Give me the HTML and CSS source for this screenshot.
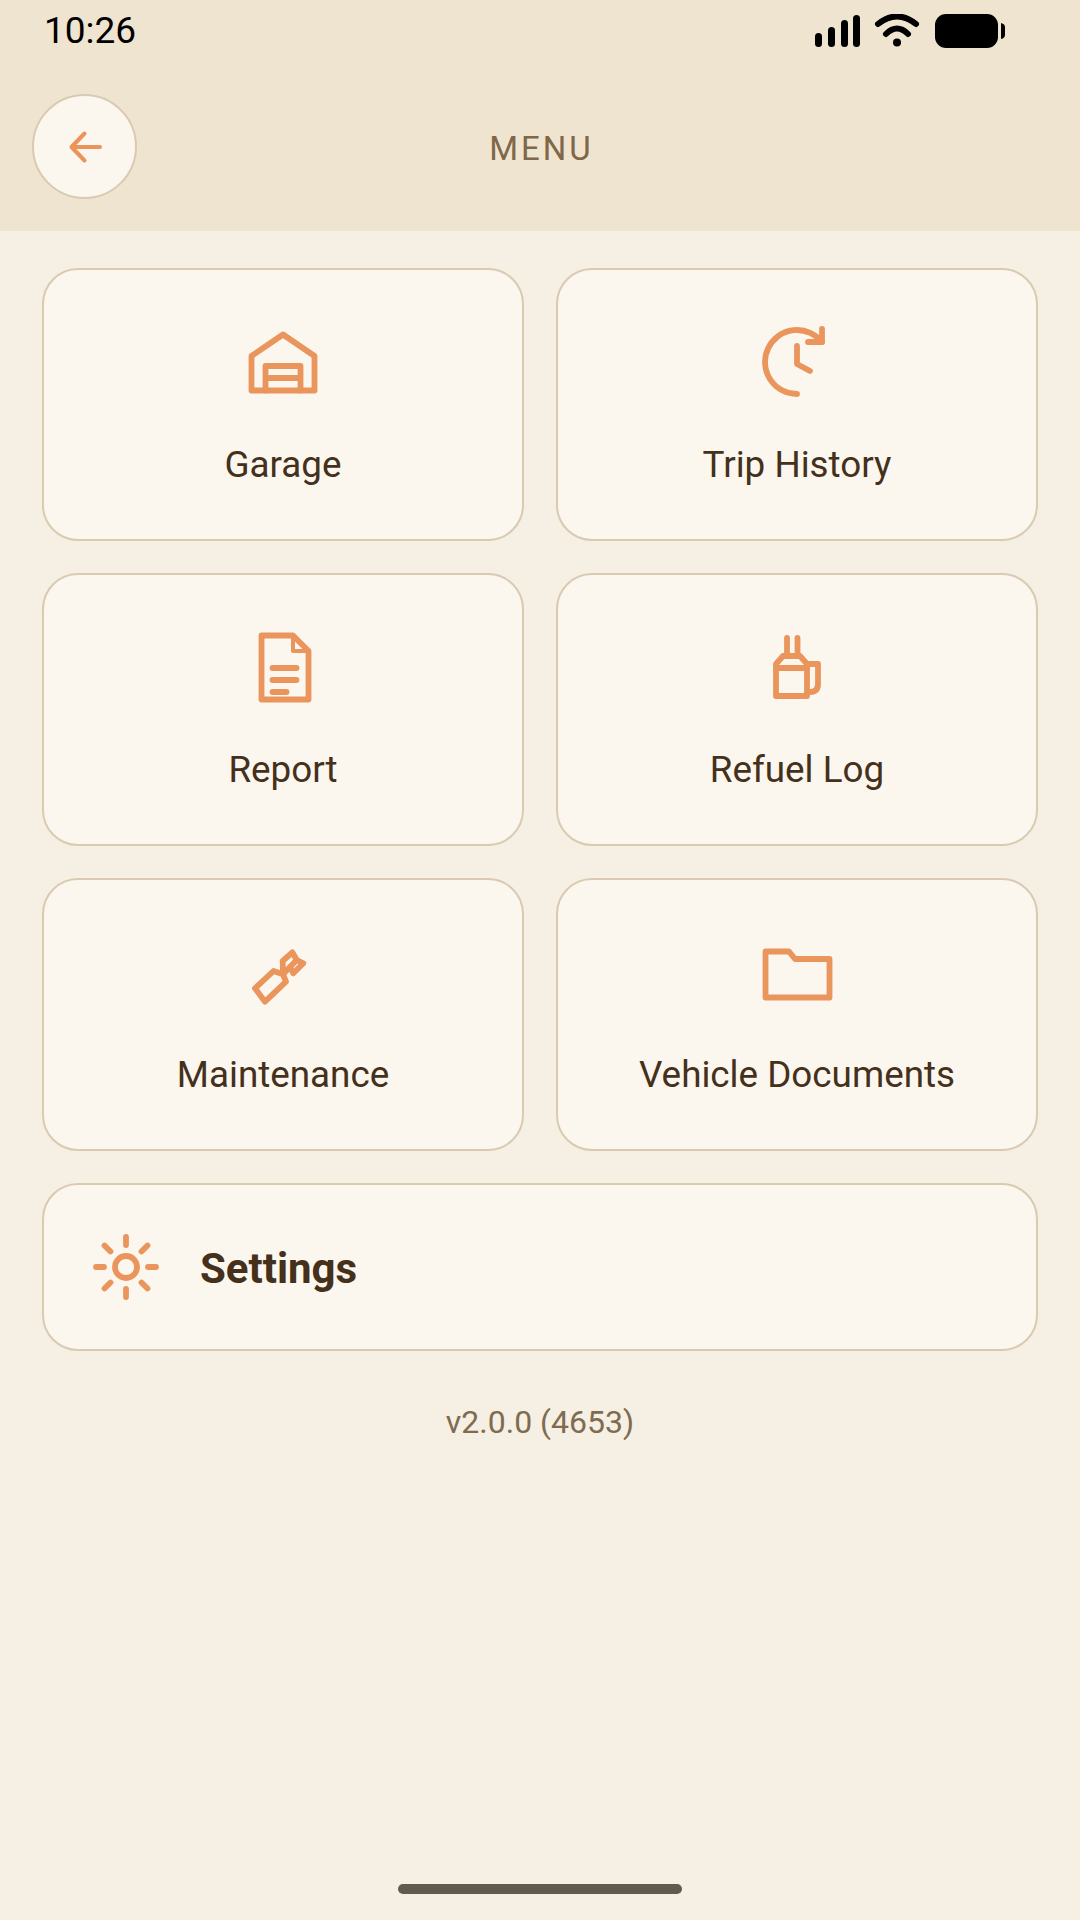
FILE: index.html
```html
<!DOCTYPE html>
<html lang="en">
  <head>
    <meta charset="UTF-8" />
    <meta name="viewport" content="width=device-width, initial-scale=1.0" />
    <title>Menu</title>
    <link rel="stylesheet" href="styles.css">
  </head>
  <body>
    <header class="top">
      <div class="status">
        <span class="clock">10:26</span>
        <svg class="status-icons" width="190" height="34" viewBox="0 0 190 34">
          <rect x="0" y="19" width="7" height="14" rx="3.5" />
          <rect x="13" y="13" width="7" height="20" rx="3.5" />
          <rect x="26" y="6" width="7" height="27" rx="3.5" />
          <rect x="38" y="1" width="7" height="32" rx="3.5" />
          <path class="wifi" d="M63 10 Q82 -5 101 10" />
          <path class="wifi" d="M71 20 Q82 9 93 20" />
          <circle cx="82" cy="28.5" r="4" />
          <rect x="120" y="0" width="63" height="34" rx="11" />
          <path d="M186 9 Q190 10 190 13 V21 Q190 24 186 25 Z" />
        </svg>
      </div>
      <div class="toolbar">
        <button class="back">
          <svg width="40" height="40" viewBox="0 0 40 40">
            <path d="M35 20 H6.5 M19.5 6.5 L6.5 20 L19.5 33.5" />
          </svg>
        </button>
        <h1>MENU</h1>
      </div>
    </header>

    <main class="menu">
      <div class="tiles">
        <a class="tile">
          <svg class="icon" viewBox="0 0 80 80">
            <path d="M8.5 68.5 V34 L40 12.5 L71.5 34 V68.5 Z" />
            <path d="M22.5 68.5 V44 H57.5 V68.5 M22.5 56 H57.5" />
          </svg>
          <span>Garage</span>
        </a>
        <a class="tile">
          <svg class="icon" viewBox="0 0 80 80">
            <path d="M40 72 A32 32 0 1 1 65 20" />
            <path d="M65 7 V20 H51" />
            <path d="M40 24 V42 L53 49" />
          </svg>
          <span>Trip History</span>
        </a>
        <a class="tile">
          <svg class="icon" viewBox="0 0 80 80">
            <path d="M18.5 8.5 H50 L65.5 24 V72.5 H18.5 Z" />
            <path class="thin" d="M50 8.5 V24 H65.5" />
            <path d="M29.5 41 H53.5 M29.5 53 H53.5 M29.5 65 H43.5" />
          </svg>
          <span>Report</span>
        </a>
        <a class="tile">
          <svg class="icon" viewBox="0 0 80 80">
            <path d="M30 11 V29 M40.5 11 V29" />
            <path d="M26 29 H43 L50 37 V69 H19 V37 Z" />
            <path d="M19 41 H50" />
            <path d="M50 37 H61 V57 Q61 65 53 65 H50" />
          </svg>
          <span>Refuel Log</span>
        </a>
        <a class="tile">
          <svg class="icon" viewBox="0 0 80 80">
            <path d="M12 56.3 L30.5 39 L40 42.3 L43 49.7 L22 69.7 Z" />
            <path d="M40 42.3 L39.7 29 L49.3 20.3 L53.7 28 L60.3 31.3 L50.3 41.3 L47 35 Z" />
            <path d="M53.7 28 L47 35" />
          </svg>
          <span>Maintenance</span>
        </a>
        <a class="tile">
          <svg class="icon" viewBox="0 0 80 80">
            <path d="M8.5 19.5 H32 L38 27 H72.5 V65.5 H8.5 Z" />
          </svg>
          <span>Vehicle Documents</span>
        </a>
      </div>

      <a class="settings">
        <svg class="icon" viewBox="0 0 80 80">
          <circle cx="40" cy="40" r="11" />
          <path d="M40 10 V18 M40 62 V70 M10 40 H18 M62 40 H70" />
          <path d="M18.5 18.5 L24.5 24.5 M61.5 18.5 L55.5 24.5 M18.5 61.5 L24.5 55.5 M61.5 61.5 L55.5 55.5" />
        </svg>
        <span>Settings</span>
      </a>

      <p class="version">v2.0.0 (4653)</p>
    </main>

    <div class="home-bar"></div>
  </body>
</html>
```

FILE: styles.css
```css
* {
  box-sizing: border-box;
}

body {
  display: flex;
  flex-direction: column;
  height: 1920px;
  margin: 0;
  font-family: Roboto, sans-serif;
  background-color: #f6efe3;
  color: #44301b;
}

.top {
  height: 231px;
  background-color: #efe4cf;
}

.status {
  display: flex;
  align-items: center;
  justify-content: space-between;
  height: 60px;
  padding: 2px 75px 0 44px;
}

.clock {
  margin-top: -2px;
  font-size: 37px;
  color: #000;
}

.status-icons {
  fill: #000;
}

.status-icons .wifi {
  fill: none;
  stroke: #000;
  stroke-width: 6px;
  stroke-linecap: round;
}

.toolbar {
  display: flex;
  align-items: center;
  height: 105px;
  margin-top: 34px;
  padding-left: 32px;
}

.back {
  display: flex;
  align-items: center;
  justify-content: center;
  width: 105px;
  height: 105px;
  padding: 0;
  background-color: #fbf6ee;
  border: 2px solid #d9cab1;
  border-radius: 50%;
}

.back svg {
  fill: none;
  stroke: #eb9459;
  stroke-width: 4px;
  stroke-linecap: round;
  stroke-linejoin: round;
}

h1 {
  flex: 1;
  margin: 0 134px 0 0;
  padding-top: 3px;
  text-align: center;
  font-size: 33px;
  font-weight: 400;
  letter-spacing: 3px;
  color: #7f6748;
}

.menu {
  padding: 37px 42px 0;
}

.tiles {
  display: grid;
  grid-template-columns: 482px 482px;
  grid-auto-rows: 273px;
  gap: 32px;
}

.tile {
  display: flex;
  flex-direction: column;
  align-items: center;
  padding-top: 52px;
  font-size: 36.8px;
  background-color: #fbf6ee;
  border: 2px solid #d9cab1;
  border-radius: 36px;
}

.tile span {
  margin-top: 41px;
}

.icon {
  flex-shrink: 0;
  width: 80px;
  height: 80px;
  fill: none;
  stroke: #e9955c;
  stroke-width: 5.8px;
  stroke-linecap: round;
  stroke-linejoin: round;
}

.icon .thin {
  stroke-width: 4px;
}

.settings {
  display: flex;
  align-items: center;
  gap: 34px;
  height: 168px;
  margin-top: 32px;
  padding-left: 42px;
  font-size: 42px;
  font-weight: 700;
  background-color: #fbf6ee;
  border: 2px solid #d9cab1;
  border-radius: 36px;
}

.settings span {
  padding-top: 2px;
}

.version {
  margin: 52px 0 0;
  text-align: center;
  font-size: 32px;
  color: #7f6b50;
}

.home-bar {
  width: 284px;
  height: 10px;
  margin: auto 0 26px 398px;
  background-color: #5f5b4f;
  border-radius: 5px;
}
```
